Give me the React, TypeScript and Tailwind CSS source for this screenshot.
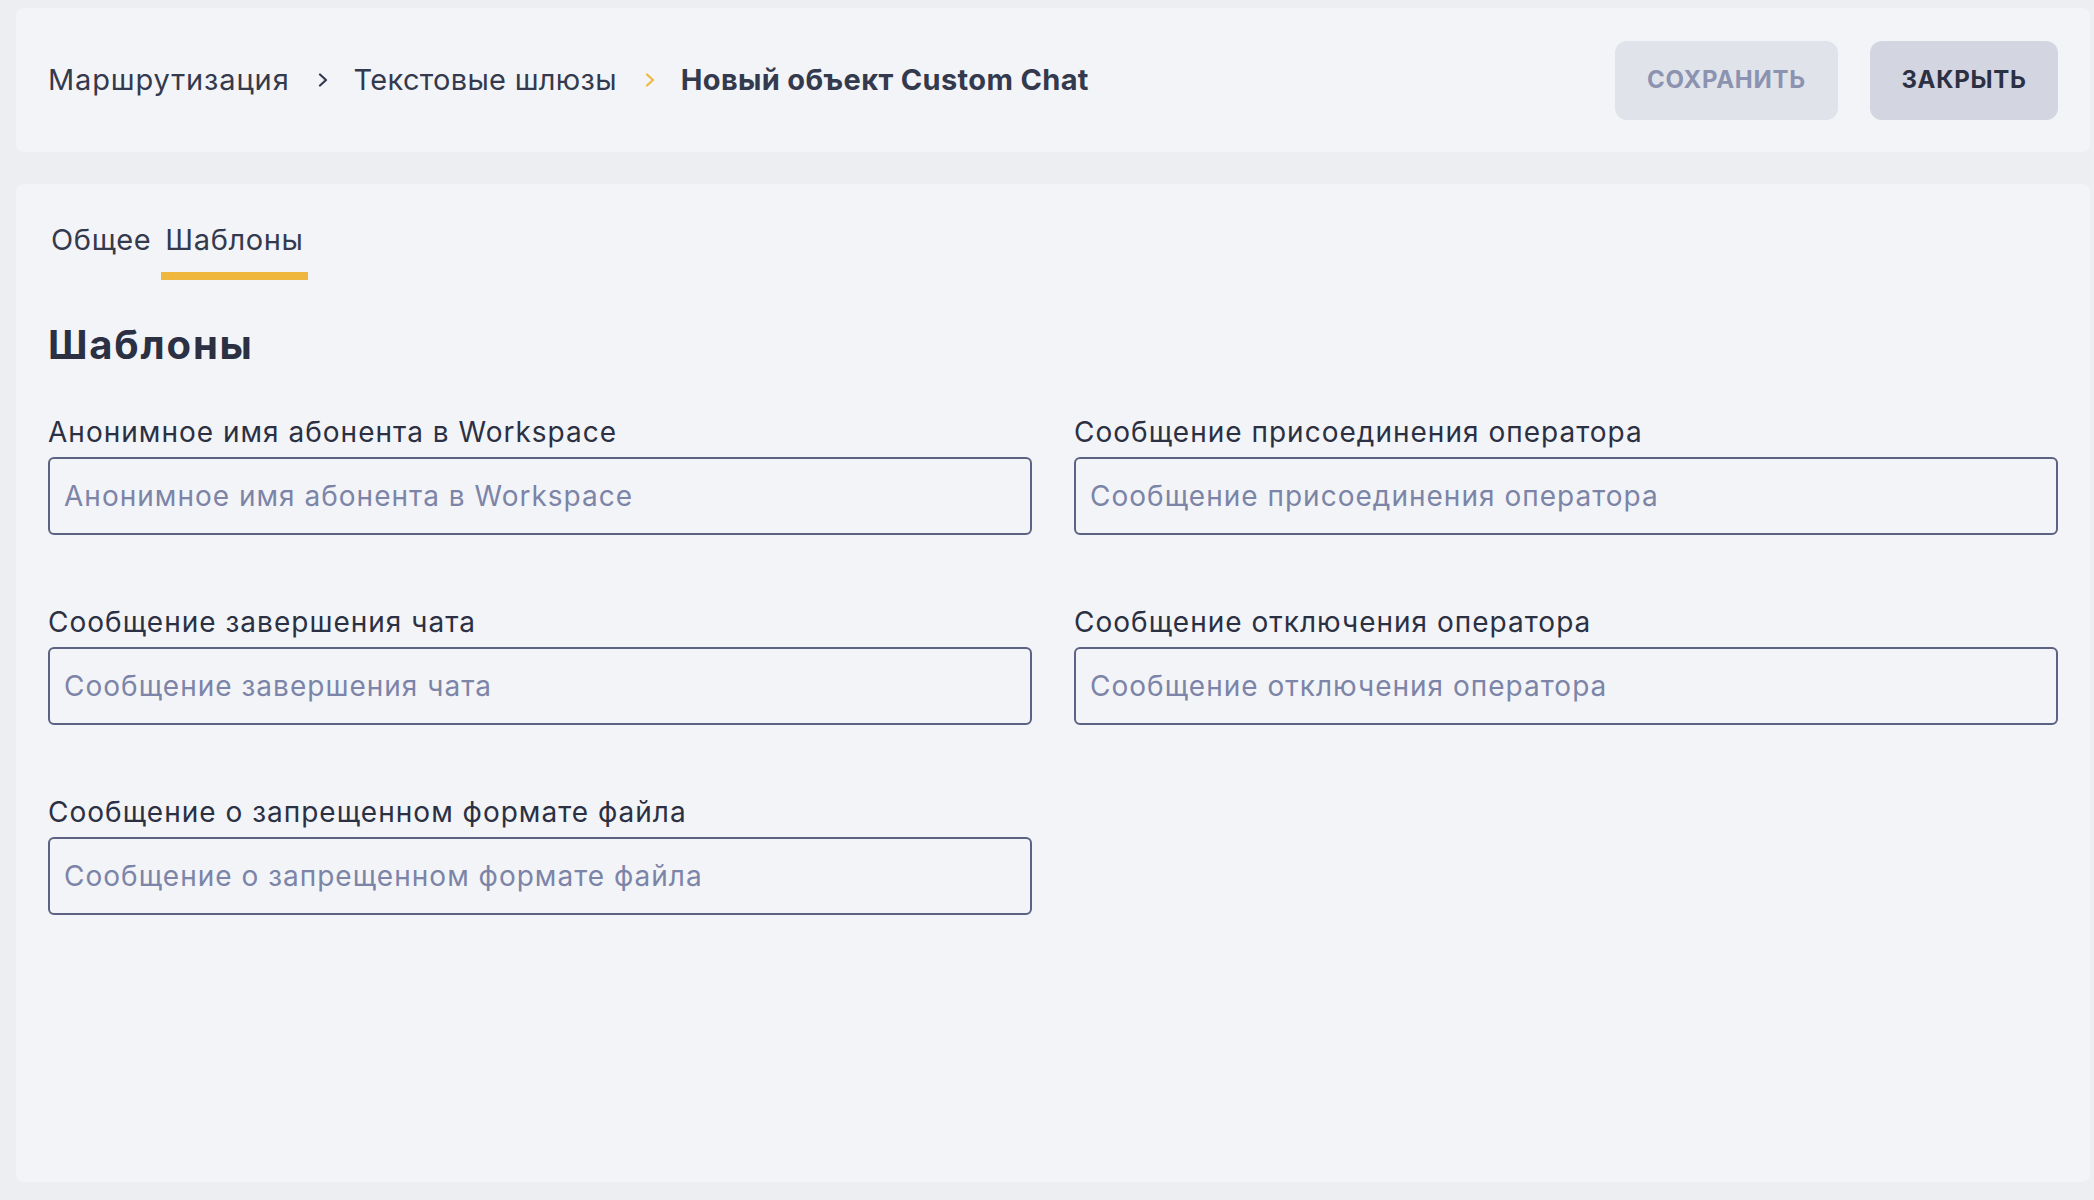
import React from "react";

const FONT = "font-['Inter','Noto_Sans',sans-serif]";

function Chevron({ className }: { className: string }) {
  return (
    <svg viewBox="0 0 10 14" className={className} fill="none">
      <polyline
        points="2,1.5 8,7 2,12.5"
        stroke="currentColor"
        strokeWidth="2.2"
        strokeLinecap="round"
        strokeLinejoin="round"
      />
    </svg>
  );
}

const fields = [
  "Анонимное имя абонента в Workspace",
  "Сообщение присоединения оператора",
  "Сообщение завершения чата",
  "Сообщение отключения оператора",
  "Сообщение о запрещенном формате файла",
];

function Field({ label }: { label: string }) {
  return (
    <label className="flex flex-col gap-2">
      <span className="text-[28px] leading-[34px] text-[#2b3043] tracking-[0.036em]">
        {label}
      </span>
      <input
        type="text"
        placeholder={label}
        className="h-[78px] w-full rounded-md border-2 border-[#5b6283] bg-transparent px-[14px] text-[28px] text-[#2b3043] tracking-[0.036em] outline-none placeholder:text-[#7c84a8]"
      />
    </label>
  );
}

export default function App() {
  return (
    <div
      className={`${FONT} flex h-[1200px] flex-col gap-8 bg-[#edeef2] pb-[18px] pl-4 pr-1 pt-2`}
    >
      <header className="flex h-[144px] shrink-0 items-center justify-between rounded-lg bg-[#f3f4f7] px-8">
        <nav className="flex items-center text-[29px] text-[#343a4e]">
          <span className="tracking-[0.03em]">Маршрутизация</span>
          <Chevron className="ml-[28px] mr-[26px] h-[14px] w-[10px] text-[#343a4e]" />
          <span className="tracking-[0.01em]">Текстовые шлюзы</span>
          <Chevron className="ml-[28px] mr-[26px] h-[14px] w-[10px] text-[#f0b73f]" />
          <span className="font-bold tracking-[0.012em]">Новый объект Custom Chat</span>
        </nav>
        <div className="flex items-center gap-8">
          <button className="h-[79px] w-[223px] rounded-xl bg-[#e1e3ea] text-[24px] font-bold uppercase tracking-[0.03em] text-[#8b93b0]">
            Сохранить
          </button>
          <button className="h-[79px] w-[188px] rounded-xl bg-[#d3d5e0] text-[24px] font-bold uppercase tracking-[0.03em] text-[#2b3043]">
            Закрыть
          </button>
        </div>
      </header>

      <main className="flex-1 rounded-lg bg-[#f3f4f7] px-8 pt-[38px]">
        <div className="flex gap-[7px] text-[29px] leading-[35px] text-[#343a4e] tracking-[0.022em]">
          <button className="border-b-8 border-transparent px-[3px] pb-[15px]">
            Общее
          </button>
          <button className="border-b-8 border-[#f0b73f] px-[4px] pb-[15px]">
            Шаблоны
          </button>
        </div>

        <h1 className="mt-[42px] text-[40px] font-bold leading-[45px] text-[#2b3043] tracking-[0.045em]">
          Шаблоны
        </h1>

        <div className="mt-[48px] grid grid-cols-2 gap-x-[42px] gap-y-[70px]">
          {fields.map((f) => (
            <Field key={f} label={f} />
          ))}
        </div>
      </main>
    </div>
  );
}
